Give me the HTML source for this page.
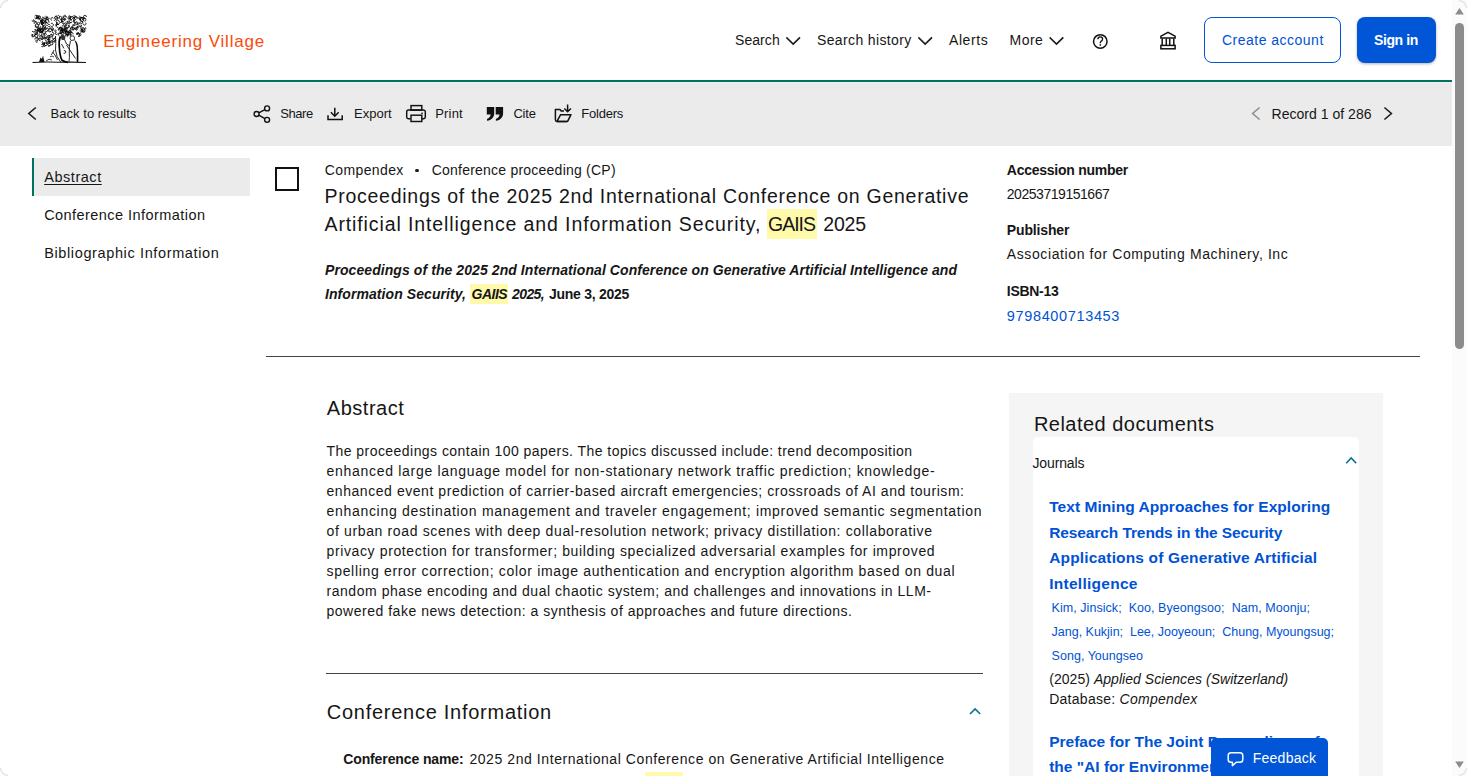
<!DOCTYPE html><html><head><meta charset="utf-8"><style>
html,body{margin:0;padding:0;}
body{width:1467px;height:776px;overflow:hidden;position:relative;background:#fff;font-family:"Liberation Sans",sans-serif;}
.t{position:absolute;white-space:nowrap;line-height:1;}
.a{position:absolute;}
</style></head><body>
<!-- header -->
<div class="a" style="left:0;top:80px;width:1452px;height:2px;background:#00735e"></div>
<div class="a" style="left:0;top:82px;width:1452px;height:1px;background:#f3eef0"></div>
<div class="a" style="left:0;top:83px;width:1452px;height:63px;background:#ebebeb"></div>
<!-- scrollbar -->
<div class="a" style="left:1452px;top:0;width:15px;height:776px;background:#fbfbfb"></div>
<div class="a" style="left:1455px;top:23px;width:9px;height:326px;background:#8c8c8c;border-radius:4.5px"></div>
<svg class="a" style="left:1452px;top:0" width="15" height="776"><path d="M3.2 14.5 L7.5 8 L11.8 14.5Z" fill="#8c8c8c"/><path d="M3.2 761.5 L7.5 768 L11.8 761.5Z" fill="#8c8c8c"/></svg>
<!-- buttons -->
<div class="a" style="left:1204px;top:17px;width:135px;height:44px;border:1px solid #0056d6;border-radius:8px"></div>
<div class="a" style="left:1357px;top:17px;width:79px;height:46px;background:#0056d6;border-radius:8px;box-shadow:0 1px 3px rgba(0,0,0,0.3)"></div>
<!-- header icons -->
<svg class="a" style="left:0;top:0" width="1452" height="146">
 <g fill="none" stroke="#1c1c1c" stroke-width="1.7" stroke-linecap="square" stroke-linejoin="miter">
  <path d="M787 38 L793.2 44 L799.4 38"/>
  <path d="M919 38 L925.2 44 L931.4 38"/>
  <path d="M1050.3 38 L1056.5 44 L1062.7 38"/>
 </g>
 <circle cx="1100.3" cy="41.4" r="6.75" fill="none" stroke="#111" stroke-width="1.5"/>
 <path d="M1097.9 39.3 Q1097.9 36.9 1100.3 36.9 Q1102.6 36.9 1102.6 39.1 Q1102.6 40.6 1101 41.4 Q1100.3 41.9 1100.3 43.2" fill="none" stroke="#111" stroke-width="1.3"/>
 <rect x="1099.6" y="44.2" width="1.4" height="1.5" fill="#111"/>
 <g fill="none" stroke="#111" stroke-width="1.5">
  <path d="M1160.9 37.9 L1160.9 36.2 L1168 32.3 L1175.1 36.2 L1175.1 37.9 Z"/>
  <path d="M1162.2 38.5 V45 M1166.3 38.5 V45 M1169.7 38.5 V45 M1173.8 38.5 V45"/>
  <rect x="1160.9" y="45.4" width="14.2" height="3.4"/>
 </g>
 <!-- toolbar icons -->
 <g fill="none" stroke="#1c1c1c" stroke-width="1.6" stroke-linecap="butt">
  <path d="M35.8 107.5 L28.8 113.5 L35.8 119.5"/>
  <path d="M1259.6 107.5 L1252.6 113.5 L1259.6 119.5" stroke="#8a8f99"/>
  <path d="M1384.4 107.5 L1391.4 113.5 L1384.4 119.5"/>
 </g>
 <g fill="none" stroke="#111" stroke-width="1.35">
  <circle cx="256.6" cy="114" r="2.5"/>
  <circle cx="267.1" cy="108.4" r="2.5"/>
  <circle cx="267.1" cy="119.8" r="2.5"/>
  <path d="M258.8 112.8 L264.9 109.6 M258.8 115.2 L264.9 118.6"/>
 </g>
 <g fill="none" stroke="#111" stroke-width="1.5">
  <path d="M334.8 107.8 V116"/>
  <path d="M330.9 112.3 L334.8 116.2 L338.7 112.3"/>
  <path d="M328 115.3 V119.5 H342.2 V115.3"/>
 </g>
 <g fill="none" stroke="#111" stroke-width="1.45">
  <rect x="411" y="105.6" width="10.8" height="4.6"/>
  <path d="M410.5 118.7 H408.3 Q406.7 118.7 406.7 117 V111.8 Q406.7 110 408.5 110 H423.6 Q425.3 110 425.3 111.8 V117 Q425.3 118.7 423.6 118.7 H422"/>
  <rect x="411" y="115.2" width="10.8" height="6.3"/>
 </g>
 <rect x="421.4" y="112.6" width="1.4" height="1.4" fill="#111"/>
 <g fill="#111">
  <path d="M486.8 107.1 H494.2 V113.2 C494.2 117.2 491.5 120.2 487 120.7 V118.9 C489.1 118.4 490.4 116.8 490.7 114.6 H486.8 Z"/>
  <path d="M495.7 107.1 H503.1 V113.2 C503.1 117.2 500.4 120.2 495.9 120.7 V118.9 C498 118.4 499.3 116.8 499.6 114.6 H495.7 Z"/>
 </g>
 <g fill="none" stroke="#111" stroke-width="1.5" stroke-linejoin="round">
  <path d="M564 111 H561.2 L560 109.6 H555.4 V119.8 Q555.4 121.4 557 121.4 H566.6"/>
  <path d="M557 121.4 L560.6 114.7 H571 L567.6 121.4 Z"/>
  <path d="M567.6 104.4 V111.6 M564.3 108.4 L567.6 111.8 L570.9 108.4"/>
 </g>
</svg>
<!-- left nav -->
<div class="a" style="left:32px;top:158px;width:218px;height:38px;background:#ebebeb;border-left:2.5px solid #00735e;box-sizing:border-box"></div>
<!-- checkbox -->
<div class="a" style="left:275px;top:167px;width:24px;height:24px;border:2px solid #111;box-sizing:border-box"></div>
<!-- bullet -->
<div class="a" style="left:415.3px;top:168.5px;width:3.6px;height:3.6px;border-radius:2px;background:#1c1c1c"></div>
<!-- highlights -->
<div class="a" style="left:767px;top:209px;width:50px;height:30px;background:#fffaaa"></div>
<div class="a" style="left:470px;top:283.5px;width:38px;height:20.5px;background:#fffaaa"></div>
<div class="a" style="left:645px;top:772px;width:38px;height:10px;background:#fffaaa"></div>
<!-- rules -->
<div class="a" style="left:266px;top:356px;width:1154px;height:1px;background:#444"></div>
<div class="a" style="left:326px;top:673px;width:657px;height:1px;background:#444"></div>
<!-- related panel -->
<div class="a" style="left:1009px;top:393px;width:374px;height:383px;background:#f5f5f5"></div>
<div class="a" style="left:1033px;top:437px;width:326px;height:339px;background:#fff;border-radius:5px 5px 0 0"></div>
<svg class="a" style="left:0;top:0;z-index:1" width="1452" height="776">
 <g fill="none" stroke="#0b6e94" stroke-width="1.6">
  <path d="M970 714 L975.1 708.9 L980.2 714"/>
  <path d="M1346.2 463.2 L1351.2 458 L1356.2 463.2"/>
 </g>
</svg>
<!-- feedback -->
<div class="a" style="left:1211px;top:738px;width:117px;height:38px;background:#0056d6;border-radius:5px 5px 0 0;z-index:10"></div>
<svg class="a" style="left:1211px;top:738px;z-index:11" width="117" height="38">
 <path d="M20 14.8 H29 Q31.8 14.8 31.8 17.6 V21.4 Q31.8 24.2 29 24.2 H25.3 L21.4 27.6 V24.2 H20 Q17.2 24.2 17.2 21.4 V17.6 Q17.2 14.8 20 14.8 Z" fill="none" stroke="#fff" stroke-width="1.5" stroke-linejoin="round"/>
</svg>
<svg class="a" style="left:0;top:0" width="100" height="80" viewBox="0 0 100 80"><path fill="none" stroke="#000" stroke-width="0.85" d="M57.4 33.7A1.1 1.1 0 1 1 56.6 32.3M81.0 30.8A1.0 1.0 0 1 1 82.1 31.4M59.3 35.5A1.3 1.3 0 1 1 60.7 34.2M42.2 30.7A1.2 1.2 0 1 1 40.7 31.8M38.7 24.9A1.7 1.7 0 1 1 37.0 23.7M37.7 41.8A1.1 1.1 0 1 1 37.9 40.8M68.4 16.2A1.5 1.5 0 1 1 69.0 18.8M66.9 34.1A1.1 1.1 0 1 1 66.3 35.6M59.6 16.8A1.4 1.4 0 1 1 59.3 18.4M42.3 24.6A1.1 1.1 0 1 1 43.0 24.2M34.8 29.3A1.6 1.6 0 1 1 32.1 30.9M56.6 25.6A0.9 0.9 0 1 1 57.6 24.4M50.1 24.0A1.4 1.4 0 1 1 49.7 21.9M48.4 18.7A1.0 1.0 0 1 1 48.2 17.4M72.5 27.4A1.3 1.3 0 1 1 72.9 29.7M78.0 29.2A1.3 1.3 0 1 1 78.6 27.1M81.9 29.3A1.5 1.5 0 1 1 79.8 31.3M85.3 27.4A1.0 1.0 0 1 1 84.0 27.9M36.3 37.0A1.5 1.5 0 1 1 37.2 34.7M74.4 23.3A1.1 1.1 0 1 1 72.9 24.5M38.1 26.2A1.4 1.4 0 1 1 35.9 25.2M38.3 22.3A1.3 1.3 0 1 1 37.3 22.9M36.6 18.8A1.2 1.2 0 1 1 38.7 17.5M76.4 22.3A1.6 1.6 0 1 1 74.2 20.1M60.9 30.0A1.4 1.4 0 1 1 62.1 31.2M42.5 37.6A1.1 1.1 0 1 1 41.6 39.6M38.5 35.0A1.1 1.1 0 1 1 39.1 37.0M38.1 27.9A1.1 1.1 0 1 1 37.1 29.0M44.2 25.2A1.1 1.1 0 1 1 43.9 23.3M47.4 44.5A1.5 1.5 0 1 1 49.9 43.1M42.0 27.6A1.5 1.5 0 1 1 42.1 28.9M44.9 23.1A1.7 1.7 0 1 1 42.2 23.0M73.2 27.7A1.5 1.5 0 1 1 75.2 25.8M49.1 17.8A1.2 1.2 0 1 1 48.2 17.1M36.2 34.9A1.1 1.1 0 1 1 37.9 34.3M44.2 35.4A1.2 1.2 0 1 1 46.2 35.2M51.1 29.6A1.1 1.1 0 1 1 51.3 30.8M84.5 29.9A1.3 1.3 0 1 1 82.6 30.4M41.9 19.7A1.0 1.0 0 1 1 41.0 20.2M46.6 22.0A1.1 1.1 0 1 1 45.4 20.8M41.4 44.9A1.3 1.3 0 1 1 41.4 46.0M80.1 33.4A1.4 1.4 0 1 1 78.6 35.7M55.1 17.9A1.3 1.3 0 1 1 53.8 20.2M44.8 36.9A1.0 1.0 0 1 1 44.0 37.4M45.2 40.8A1.0 1.0 0 1 1 46.0 42.5M63.3 23.9A1.5 1.5 0 1 1 63.9 26.6M41.6 37.3A1.1 1.1 0 1 1 40.4 38.4M34.5 24.0A1.5 1.5 0 1 1 37.1 23.6M64.4 23.2A1.7 1.7 0 1 1 63.9 25.8M81.3 21.0A1.3 1.3 0 1 1 80.2 22.3M54.7 18.7A1.6 1.6 0 1 1 56.3 19.5M42.4 26.3A1.4 1.4 0 1 1 40.8 26.2M64.1 19.1A1.6 1.6 0 1 1 62.9 18.5M50.2 43.4A1.4 1.4 0 1 1 51.1 44.9M68.0 34.8A1.5 1.5 0 1 1 70.5 35.1M39.5 16.1A1.0 1.0 0 1 1 38.8 16.4M33.7 36.8A1.2 1.2 0 1 1 33.4 34.6M35.7 34.1A1.2 1.2 0 1 1 36.7 34.0M50.7 38.1A0.9 0.9 0 1 1 51.8 36.7M54.8 39.1A1.4 1.4 0 1 1 53.4 41.4M77.7 34.0A0.9 0.9 0 1 1 78.9 34.7M67.3 28.2A1.6 1.6 0 1 1 64.6 26.7M63.7 35.9A1.0 1.0 0 1 1 64.1 34.0M35.1 35.0A1.5 1.5 0 1 1 36.6 37.3M71.1 29.1A1.0 1.0 0 1 1 72.1 27.4M71.1 35.4A1.5 1.5 0 1 1 73.1 34.4M35.0 39.5A1.6 1.6 0 1 1 37.7 40.3M35.0 33.8A1.6 1.6 0 1 1 32.2 33.9M59.3 22.8A1.3 1.3 0 1 1 57.3 22.0M70.7 31.7A1.1 1.1 0 1 1 70.6 30.8M47.1 38.0A1.5 1.5 0 1 1 49.4 38.0M42.7 22.6A1.3 1.3 0 1 1 43.7 22.3M49.8 38.1A1.4 1.4 0 1 1 50.1 35.3M41.8 30.3A1.3 1.3 0 1 1 43.2 30.5M78.4 27.0A1.5 1.5 0 1 1 79.9 29.3M63.0 26.7A1.0 1.0 0 1 1 64.5 25.6M37.8 31.2A1.6 1.6 0 1 1 39.1 33.0M46.8 22.9A1.7 1.7 0 1 1 48.6 21.2M56.5 23.5A1.0 1.0 0 1 1 55.9 25.4M44.4 27.5A1.6 1.6 0 1 1 42.8 27.5M65.7 32.3A1.0 1.0 0 1 1 66.7 31.6M48.1 42.1A1.0 1.0 0 1 1 49.4 42.9M34.6 16.1A1.7 1.7 0 1 1 34.6 17.8M79.4 16.2A1.1 1.1 0 1 1 78.0 17.4M71.6 34.6A1.6 1.6 0 1 1 71.7 32.8M47.7 40.3A1.1 1.1 0 1 1 48.6 41.6M33.5 19.3A1.0 1.0 0 1 1 32.0 20.3M57.6 17.3A1.1 1.1 0 1 1 56.4 15.6M76.5 22.1A1.3 1.3 0 1 1 75.8 24.2M40.7 18.3A1.4 1.4 0 1 1 40.0 16.0M67.2 29.6A1.3 1.3 0 1 1 66.3 28.6M70.4 22.3A1.4 1.4 0 1 1 68.4 20.9M57.8 23.0A1.5 1.5 0 1 1 59.1 21.3M71.8 21.6A1.3 1.3 0 1 1 71.5 20.7M47.1 28.2A1.5 1.5 0 1 1 48.2 26.3M68.9 32.9A1.1 1.1 0 1 1 70.6 32.8M52.7 41.5A1.1 1.1 0 1 1 54.4 40.7M80.9 20.1A1.4 1.4 0 1 1 82.0 17.7M38.3 31.4A1.5 1.5 0 1 1 39.6 31.4M52.1 32.3A1.4 1.4 0 1 1 51.3 34.5M84.3 31.2A1.6 1.6 0 1 1 82.5 28.9M66.7 21.5A1.0 1.0 0 1 1 66.2 22.6M42.7 44.5A1.0 1.0 0 1 1 43.7 44.9M50.5 44.9A1.4 1.4 0 1 1 49.0 42.9M78.9 27.5A1.0 1.0 0 1 1 78.6 25.9M37.3 29.2A1.0 1.0 0 1 1 35.7 29.0M57.5 15.8A1.3 1.3 0 1 1 57.1 17.3M74.5 19.0A1.6 1.6 0 1 1 77.2 18.5M76.4 21.5A1.2 1.2 0 1 1 74.8 20.2M51.5 40.3A1.5 1.5 0 1 1 50.5 39.0M38.5 19.7A1.4 1.4 0 1 1 40.3 21.9M82.4 32.2A1.2 1.2 0 1 1 84.0 32.0M82.5 19.4A1.0 1.0 0 1 1 84.1 19.2M44.6 31.0A1.5 1.5 0 1 1 42.6 31.6M47.8 37.6A1.0 1.0 0 1 1 46.9 37.9M65.7 33.3A1.3 1.3 0 1 1 67.7 32.8M77.3 32.4A1.0 1.0 0 1 1 76.7 32.8M48.5 26.5A1.3 1.3 0 1 1 47.6 27.5M44.2 42.0A1.1 1.1 0 1 1 42.9 41.4M63.9 22.8A1.1 1.1 0 1 1 62.7 21.2M60.5 30.3A1.4 1.4 0 1 1 60.1 32.7M63.6 18.1A1.6 1.6 0 1 1 66.2 17.5M54.6 40.7A1.0 1.0 0 1 1 52.7 40.4M60.8 30.8A1.6 1.6 0 1 1 62.1 32.8M69.2 19.4A1.3 1.3 0 1 1 70.3 18.9M61.8 27.3A1.7 1.7 0 1 1 59.5 28.1M47.0 29.8A1.0 1.0 0 1 1 45.6 30.8M39.0 31.1A1.6 1.6 0 1 1 40.5 29.2M58.3 27.3A1.6 1.6 0 1 1 59.1 25.1M43.3 35.3A1.0 1.0 0 1 1 41.8 34.4M83.5 19.4A1.7 1.7 0 1 1 81.5 18.4M73.5 15.7A1.1 1.1 0 1 1 73.0 17.0M41.5 22.4A1.2 1.2 0 1 1 41.5 23.7M69.4 26.9A0.9 0.9 0 1 1 69.9 25.5M50.4 35.9A1.0 1.0 0 1 1 51.9 35.9M36.6 38.5A1.0 1.0 0 1 1 38.2 39.5M38.0 33.0A1.4 1.4 0 1 1 39.8 32.6M45.1 21.3A0.9 0.9 0 1 1 45.4 23.0M59.3 28.6A1.7 1.7 0 1 1 60.1 31.1M51.4 28.0A1.2 1.2 0 1 1 51.3 29.5M60.6 19.4A1.5 1.5 0 1 1 59.1 21.3M43.9 34.1A1.7 1.7 0 1 1 42.2 34.1M65.4 32.9A1.2 1.2 0 1 1 67.1 33.5M76.4 34.7A1.6 1.6 0 1 1 78.0 36.6M79.3 22.5A1.2 1.2 0 1 1 77.1 22.7M80.6 24.9A0.9 0.9 0 1 1 79.9 25.4M47.8 43.8A1.5 1.5 0 1 1 47.8 45.5M79.0 19.5A1.1 1.1 0 1 1 80.5 21.2M44.0 38.9A1.0 1.0 0 1 1 45.4 39.4M47.2 19.4A1.2 1.2 0 1 1 46.6 17.9M77.0 30.4A1.3 1.3 0 1 1 78.0 28.3M74.8 21.1A1.2 1.2 0 1 1 75.1 18.8M55.3 36.9A1.6 1.6 0 1 1 53.6 35.6M82.9 20.3A1.6 1.6 0 1 1 84.4 21.2M42.2 17.1A1.1 1.1 0 1 1 41.1 18.3M39.1 18.1A1.6 1.6 0 1 1 39.1 16.3M60.8 31.7A1.0 1.0 0 1 1 61.0 32.6M62.7 21.4A0.9 0.9 0 1 1 63.4 20.0M43.0 22.8A1.2 1.2 0 1 1 42.9 21.7M80.8 19.9A1.6 1.6 0 1 1 83.5 19.6M51.0 30.9A1.4 1.4 0 1 1 48.6 29.6M59.3 30.8A1.6 1.6 0 1 1 61.4 29.6M43.4 29.8A1.6 1.6 0 1 1 41.1 28.6M71.6 29.6A1.1 1.1 0 1 1 72.6 29.4M43.1 22.6A1.6 1.6 0 1 1 44.1 21.3M64.8 28.7A1.2 1.2 0 1 1 67.0 29.1M66.0 31.6A1.6 1.6 0 1 1 63.2 30.6M46.5 45.6A1.4 1.4 0 1 1 47.3 44.5M76.7 29.2A0.9 0.9 0 1 1 76.7 28.0M74.3 27.9A1.2 1.2 0 1 1 73.2 27.4M72.0 19.3A1.5 1.5 0 1 1 72.3 17.4M48.9 31.1A1.7 1.7 0 1 1 52.1 30.8M66.1 36.4A1.1 1.1 0 1 1 67.4 35.9M45.0 46.2A1.1 1.1 0 1 1 44.9 44.3M68.3 25.1A1.4 1.4 0 1 1 66.6 26.8M68.7 32.7A1.4 1.4 0 1 1 66.6 32.6M60.4 29.1A1.1 1.1 0 1 1 61.4 29.0M84.7 18.1A1.4 1.4 0 1 1 86.3 17.0M46.8 28.3A1.0 1.0 0 1 1 45.4 27.6M33.4 21.8A1.3 1.3 0 1 1 35.8 22.8M52.0 20.4A1.4 1.4 0 1 1 53.5 18.4M46.9 44.9A1.5 1.5 0 1 1 45.4 42.5M61.7 33.2A1.5 1.5 0 1 1 62.9 30.8M76.2 19.6A1.3 1.3 0 1 1 77.0 18.6M42.3 31.0A1.7 1.7 0 1 1 40.5 28.9M40.0 32.4A1.5 1.5 0 1 1 41.3 32.9M65.6 19.0A1.3 1.3 0 1 1 66.1 17.1M82.1 30.1A1.4 1.4 0 1 1 84.0 30.0M58.9 34.4A1.5 1.5 0 1 1 60.6 36.1M51.1 23.4A1.6 1.6 0 1 1 50.4 25.7M68.1 34.9A1.7 1.7 0 1 1 69.0 33.2M46.5 37.6A1.0 1.0 0 1 1 47.4 39.2M45.4 16.1A1.3 1.3 0 1 1 44.1 16.7M40.6 40.9A1.5 1.5 0 1 1 41.9 38.9M71.5 17.0A1.1 1.1 0 1 1 72.1 18.6M54.4 30.3A0.9 0.9 0 1 1 54.5 31.4M85.5 22.6A1.4 1.4 0 1 1 83.2 23.7M72.0 30.6A1.0 1.0 0 1 1 70.9 29.5M63.4 20.0A1.2 1.2 0 1 1 65.7 20.2M67.1 30.8A1.5 1.5 0 1 1 67.1 29.4"/><g fill="#111" opacity="0.0"><path d="M44 27 L50 25 L52 29 L47 31Z"/><path d="M60 24 L66 22 L68 27 L63 29Z"/><path d="M70 28 L76 27 L77 31 L71 32Z"/><path d="M36 34 L41 33 L42 37 L37 38Z"/><path d="M52 33 L57 32 L58 36 L54 37Z"/><path d="M78 21 L82 20 L83 24 L79 25Z"/></g><path d="M55.5 36 Q56 44 55.5 50 Q56 57 61 62.5 M52.5 52 Q55 54 57.5 60 M51 55 Q53 53 54 50" fill="none" stroke="#111" stroke-width="0.9"/><path d="M60.3 36.5 Q58.6 41 59.4 48 Q59.8 56 62 60.2 Q64.5 62 68 62.3" fill="none" stroke="#000" stroke-width="1.7"/><path d="M60.5 36 Q62.5 34.3 64.5 35.5 Q66 37 65 39.5 Q63 40.5 61.5 39.5Z" fill="#333"/><path d="M64.5 39.5 L66.5 44 L70 46 M61.5 44 L64 48.5 M63.8 50.5 Q65.8 50.3 65.8 52.2 Q65.3 53.8 63.6 53.2" fill="none" stroke="#111" stroke-width="0.9"/><path d="M70.2 36.7 Q72 35.2 74 36.3 Q75 38 74.2 40 L71 40.5 Q69.8 38.5 70.2 36.7Z" fill="none" stroke="#222" stroke-width="0.9"/><path d="M74.3 40 Q76.6 43.5 76.7 50 Q77 56.5 76.6 61.6 L78.3 62.2 Q78.6 52 77.7 45 Q76.8 41 74.3 40Z" fill="#000"/><path d="M70.5 41 Q68.8 46 69.3 52 Q69.7 58 69 61.8 M66.5 45 L75.5 58.5" fill="none" stroke="#111" stroke-width="0.9"/><path d="M32.5 62.5 Q45 61.5 60 62.3 Q72 61.8 86 62.5" fill="none" stroke="#111" stroke-width="1.1"/><path d="M39 62 L40.5 57.5 L42 59 L43 55.5 L44.5 62Z" fill="#111"/><path d="M46 61 Q49 58 52 60 M50 57 Q52 55 54 57" fill="none" stroke="#111" stroke-width="0.8"/></svg>
<svg class="a" style="left:0;top:0;z-index:20" width="1467" height="776">
 <g fill="none" stroke="#e2e2e2" stroke-width="1.3">
  <path d="M0.6 8 A7.5 7.5 0 0 1 8 0.6"/>
  <path d="M1459 0.6 A7.5 7.5 0 0 1 1466.4 8"/>
  <path d="M0.6 768 A7.5 7.5 0 0 0 8 775.4"/>
  <path d="M1466.4 768 A7.5 7.5 0 0 1 1459 775.4"/>
 </g>
</svg>

<div class="t" id="t0" style="left:103.30px;top:32.81px;font-size:17px;font-weight:400;font-style:normal;color:#fc4a0a;letter-spacing:0.823px;">Engineering Village</div>
<div class="t" id="t1" style="left:735.00px;top:33.15px;font-size:14px;font-weight:400;font-style:normal;color:#161616;letter-spacing:0.068px;">Search</div>
<div class="t" id="t2" style="left:817.00px;top:33.15px;font-size:14px;font-weight:400;font-style:normal;color:#161616;letter-spacing:0.363px;">Search history</div>
<div class="t" id="t3" style="left:949.00px;top:33.15px;font-size:14px;font-weight:400;font-style:normal;color:#161616;letter-spacing:0.581px;">Alerts</div>
<div class="t" id="t4" style="left:1009.50px;top:33.15px;font-size:14px;font-weight:400;font-style:normal;color:#161616;letter-spacing:0.465px;">More</div>
<div class="t" id="t5" style="left:1222.00px;top:33.45px;font-size:14px;font-weight:400;font-style:normal;color:#0052d4;letter-spacing:0.488px;">Create account</div>
<div class="t" id="t6" style="left:1374.00px;top:33.45px;font-size:14px;font-weight:700;font-style:normal;color:#ffffff;letter-spacing:-0.412px;">Sign in</div>
<div class="t" id="t7" style="left:50.60px;top:107.00px;font-size:13px;font-weight:400;font-style:normal;color:#161616;letter-spacing:0.031px;">Back to results</div>
<div class="t" id="t8" style="left:280.20px;top:106.80px;font-size:13px;font-weight:400;font-style:normal;color:#161616;letter-spacing:-0.426px;">Share</div>
<div class="t" id="t9" style="left:354.00px;top:106.80px;font-size:13px;font-weight:400;font-style:normal;color:#161616;letter-spacing:0.004px;">Export</div>
<div class="t" id="t10" style="left:435.20px;top:106.80px;font-size:13px;font-weight:400;font-style:normal;color:#161616;letter-spacing:0.191px;">Print</div>
<div class="t" id="t11" style="left:513.40px;top:106.80px;font-size:13px;font-weight:400;font-style:normal;color:#161616;letter-spacing:-0.175px;">Cite</div>
<div class="t" id="t12" style="left:581.30px;top:106.80px;font-size:13px;font-weight:400;font-style:normal;color:#161616;letter-spacing:-0.227px;">Folders</div>
<div class="t" id="t13" style="left:1271.50px;top:106.95px;font-size:14px;font-weight:400;font-style:normal;color:#161616;letter-spacing:0.027px;">Record 1 of 286</div>
<div class="t" id="t14" style="left:44.20px;top:169.73px;font-size:14.5px;font-weight:400;font-style:normal;color:#161616;letter-spacing:0.545px;text-decoration:underline;text-underline-offset:2px;">Abstract</div>
<div class="t" id="t15" style="left:44.20px;top:207.53px;font-size:14.5px;font-weight:400;font-style:normal;color:#161616;letter-spacing:0.441px;">Conference Information</div>
<div class="t" id="t16" style="left:44.20px;top:245.53px;font-size:14.5px;font-weight:400;font-style:normal;color:#161616;letter-spacing:0.625px;">Bibliographic Information</div>
<div class="t" id="t17" style="left:324.80px;top:162.95px;font-size:14px;font-weight:400;font-style:normal;color:#161616;letter-spacing:0.375px;">Compendex</div>
<div class="t" id="t18" style="left:431.70px;top:162.95px;font-size:14px;font-weight:400;font-style:normal;color:#161616;letter-spacing:0.227px;">Conference proceeding (CP)</div>
<div class="t" id="t19" style="left:324.50px;top:186.89px;font-size:19.5px;font-weight:400;font-style:normal;color:#161616;letter-spacing:0.735px;">Proceedings of the 2025 2nd International Conference on Generative</div>
<div class="t" id="t20" style="left:324.50px;top:215.29px;font-size:19.5px;font-weight:400;font-style:normal;color:#161616;letter-spacing:0.890px;">Artificial Intelligence and Information Security,</div>
<div class="t" id="t21" style="left:768.10px;top:215.29px;font-size:19.5px;font-weight:400;font-style:normal;color:#161616;letter-spacing:-1.033px;">GAIIS</div>
<div class="t" id="t22" style="left:823.30px;top:215.29px;font-size:19.5px;font-weight:400;font-style:normal;color:#161616;letter-spacing:-0.197px;">2025</div>
<div class="t" id="t23" style="left:325.00px;top:263.15px;font-size:14px;font-weight:700;font-style:italic;color:#161616;letter-spacing:0.076px;">Proceedings of the 2025 2nd International Conference on Generative Artificial Intelligence and</div>
<div class="t" id="t24" style="left:325.00px;top:286.75px;font-size:14px;font-weight:700;font-style:italic;color:#161616;letter-spacing:0.074px;">Information Security,</div>
<div class="t" id="t25" style="left:471.60px;top:286.75px;font-size:14px;font-weight:700;font-style:italic;color:#161616;letter-spacing:-0.531px;">GAIIS</div>
<div class="t" id="t26" style="left:512.00px;top:286.75px;font-size:14px;font-weight:700;font-style:italic;color:#161616;letter-spacing:-0.587px;">2025,</div>
<div class="t" id="t27" style="left:549.00px;top:286.75px;font-size:14px;font-weight:700;font-style:normal;color:#161616;letter-spacing:-0.271px;">June 3, 2025</div>
<div class="t" id="t28" style="left:1006.80px;top:163.45px;font-size:14px;font-weight:700;font-style:normal;color:#161616;letter-spacing:-0.258px;">Accession number</div>
<div class="t" id="t29" style="left:1006.80px;top:187.15px;font-size:14px;font-weight:400;font-style:normal;color:#161616;letter-spacing:-0.463px;">20253719151667</div>
<div class="t" id="t30" style="left:1006.80px;top:223.25px;font-size:14px;font-weight:700;font-style:normal;color:#161616;letter-spacing:-0.150px;">Publisher</div>
<div class="t" id="t31" style="left:1006.80px;top:247.45px;font-size:14px;font-weight:400;font-style:normal;color:#161616;letter-spacing:0.607px;">Association for Computing Machinery, Inc</div>
<div class="t" id="t32" style="left:1006.80px;top:283.55px;font-size:14px;font-weight:700;font-style:normal;color:#161616;letter-spacing:-0.281px;">ISBN-13</div>
<div class="t" id="t33" style="left:1006.80px;top:308.63px;font-size:14.5px;font-weight:400;font-style:normal;color:#0052d4;letter-spacing:0.646px;">9798400713453</div>
<div class="t" id="t34" style="left:326.80px;top:398.07px;font-size:20px;font-weight:400;font-style:normal;color:#161616;letter-spacing:0.520px;">Abstract</div>
<div class="t" id="t35" style="left:326.50px;top:443.95px;font-size:14px;font-weight:400;font-style:normal;color:#161616;letter-spacing:0.451px;">The proceedings contain 100 papers. The topics discussed include: trend decomposition</div>
<div class="t" id="t36" style="left:326.50px;top:463.95px;font-size:14px;font-weight:400;font-style:normal;color:#161616;letter-spacing:0.703px;">enhanced large language model for non-stationary network traffic prediction; knowledge-</div>
<div class="t" id="t37" style="left:326.50px;top:483.95px;font-size:14px;font-weight:400;font-style:normal;color:#161616;letter-spacing:0.554px;">enhanced event prediction of carrier-based aircraft emergencies; crossroads of AI and tourism:</div>
<div class="t" id="t38" style="left:326.50px;top:503.95px;font-size:14px;font-weight:400;font-style:normal;color:#161616;letter-spacing:0.694px;">enhancing destination management and traveler engagement; improved semantic segmentation</div>
<div class="t" id="t39" style="left:326.50px;top:523.95px;font-size:14px;font-weight:400;font-style:normal;color:#161616;letter-spacing:0.640px;">of urban road scenes with deep dual-resolution network; privacy distillation: collaborative</div>
<div class="t" id="t40" style="left:326.50px;top:543.95px;font-size:14px;font-weight:400;font-style:normal;color:#161616;letter-spacing:0.625px;">privacy protection for transformer; building specialized adversarial examples for improved</div>
<div class="t" id="t41" style="left:326.50px;top:563.95px;font-size:14px;font-weight:400;font-style:normal;color:#161616;letter-spacing:0.677px;">spelling error correction; color image authentication and encryption algorithm based on dual</div>
<div class="t" id="t42" style="left:326.50px;top:583.95px;font-size:14px;font-weight:400;font-style:normal;color:#161616;letter-spacing:0.544px;">random phase encoding and dual chaotic system; and challenges and innovations in LLM-</div>
<div class="t" id="t43" style="left:326.50px;top:603.95px;font-size:14px;font-weight:400;font-style:normal;color:#161616;letter-spacing:0.514px;">powered fake news detection: a synthesis of approaches and future directions.</div>
<div class="t" id="t44" style="left:326.80px;top:702.47px;font-size:20px;font-weight:400;font-style:normal;color:#161616;letter-spacing:0.733px;">Conference Information</div>
<div class="t" id="t45" style="left:343.20px;top:751.75px;font-size:14px;font-weight:700;font-style:normal;color:#161616;letter-spacing:-0.110px;">Conference name:</div>
<div class="t" id="t46" style="left:469.40px;top:751.75px;font-size:14px;font-weight:400;font-style:normal;color:#161616;letter-spacing:0.576px;">2025 2nd International Conference on Generative Artificial Intelligence</div>
<div class="t" id="t47" style="left:1033.90px;top:413.87px;font-size:20px;font-weight:400;font-style:normal;color:#161616;letter-spacing:0.479px;">Related documents</div>
<div class="t" id="t48" style="left:1032.50px;top:455.55px;font-size:14px;font-weight:400;font-style:normal;color:#161616;letter-spacing:-0.132px;">Journals</div>
<div class="t" id="t49" style="left:1049.20px;top:498.88px;font-size:15.5px;font-weight:700;font-style:normal;color:#0052d4;letter-spacing:0.057px;">Text Mining Approaches for Exploring</div>
<div class="t" id="t50" style="left:1049.20px;top:524.68px;font-size:15.5px;font-weight:700;font-style:normal;color:#0052d4;letter-spacing:-0.098px;">Research Trends in the Security</div>
<div class="t" id="t51" style="left:1049.20px;top:550.48px;font-size:15.5px;font-weight:700;font-style:normal;color:#0052d4;letter-spacing:0.163px;">Applications of Generative Artificial</div>
<div class="t" id="t52" style="left:1049.20px;top:576.28px;font-size:15.5px;font-weight:700;font-style:normal;color:#0052d4;letter-spacing:0.274px;">Intelligence</div>
<div class="t" id="t53" style="left:1051.60px;top:602.22px;font-size:12.5px;font-weight:400;font-style:normal;color:#0052d4;letter-spacing:0.047px;">Kim, Jinsick;&nbsp; Koo, Byeongsoo;&nbsp; Nam, Moonju;</div>
<div class="t" id="t54" style="left:1051.60px;top:626.32px;font-size:12.5px;font-weight:400;font-style:normal;color:#0052d4;letter-spacing:-0.009px;">Jang, Kukjin;&nbsp; Lee, Jooyeoun;&nbsp; Chung, Myoungsug;</div>
<div class="t" id="t55" style="left:1051.60px;top:650.42px;font-size:12.5px;font-weight:400;font-style:normal;color:#0052d4;letter-spacing:0.025px;">Song, Youngseo</div>
<div class="t" id="t56" style="left:1049.20px;top:672.05px;font-size:14px;font-weight:400;font-style:normal;color:#161616;letter-spacing:0.046px;">(2025) <i>Applied Sciences (Switzerland)</i></div>
<div class="t" id="t57" style="left:1049.20px;top:692.05px;font-size:14px;font-weight:400;font-style:normal;color:#161616;letter-spacing:0.266px;">Database: <i>Compendex</i></div>
<div class="t" id="t58" style="left:1049.20px;top:734.38px;font-size:15.5px;font-weight:700;font-style:normal;color:#0052d4;">Preface for The Joint Proceedings of</div>
<div class="t" id="t59" style="left:1049.20px;top:759.28px;font-size:15.5px;font-weight:700;font-style:normal;color:#0052d4;">the "AI for Environment</div>
<div class="t" id="t60" style="left:1252.70px;top:750.95px;font-size:14px;font-weight:400;font-style:normal;color:#ffffff;letter-spacing:0.259px;z-index:12;">Feedback</div>
</body></html>
